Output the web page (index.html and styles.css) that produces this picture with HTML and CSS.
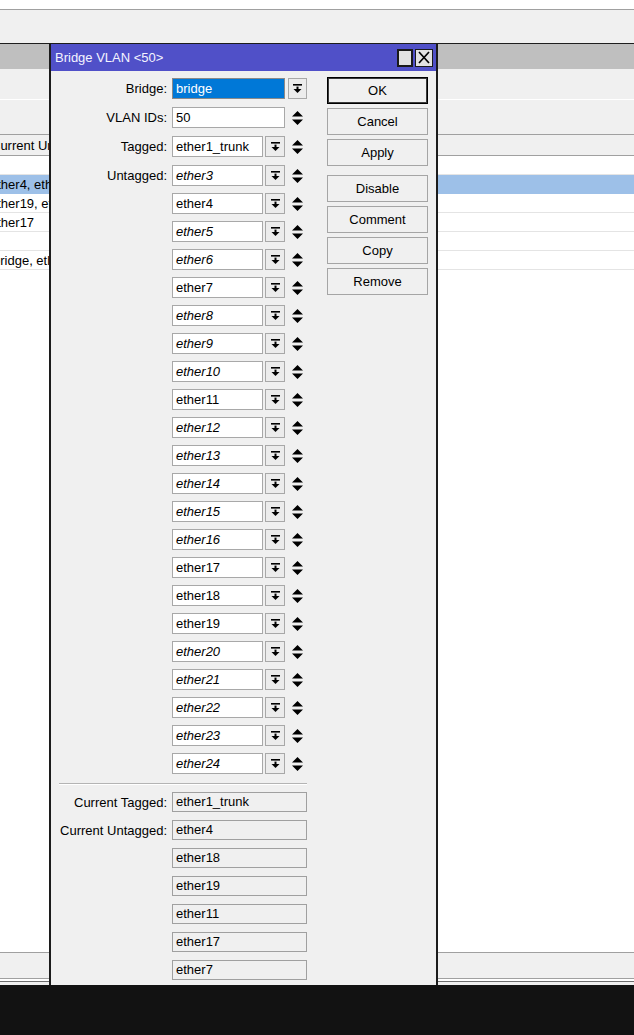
FILE: index.html
```html
<!DOCTYPE html>
<html>
<head>
<meta charset="utf-8">
<title>Bridge VLAN</title>
<link rel="stylesheet" href="styles.css">
</head>
<body>
<div class="screen">
  <div class="topstrip"></div>
  <div class="toolbar1"></div>
  <div class="parent-title"></div>
  <div class="toolbar2"></div>
  <div class="toolbar3"></div>
  <div class="thead"><span class="cell">Current Untagged</span></div>
  <div class="tbody">
    <div class="row"></div>
    <div class="row sel"><span class="cell">ether4, ether18</span></div>
    <div class="row"><span class="cell">ether19, ether11</span></div>
    <div class="row"><span class="cell">ether17</span></div>
    <div class="row"></div>
    <div class="row"><span class="cell cell-b">bridge, ether1_trunk</span></div>
  </div>
  <div class="statusbar"></div>
  <div class="bottomlines"></div>
  <div class="taskbar"></div>

  <div class="dialog">
    <div class="titlebar">
      <span class="title">Bridge VLAN &lt;50&gt;</span>
      <div class="tbtns">
        <span class="tb tb-max"></span>
        <span class="tb tb-close"><svg width="16" height="15" viewBox="0 0 16 15"><path d="M3 2 L13 13 M13 2 L3 13" stroke="#000" stroke-width="1.7" fill="none"/></svg></span>
      </div>
    </div>
    <div class="dbody">
      <div class="form">
        <div class="frow r-first">
          <span class="lbl">Bridge:</span>
          <span class="inp inp-wide inp-sel">bridge</span>
          <span class="dd dd-gap"><svg class="ddi" width="9" height="9" viewBox="0 0 9 9"><rect x="0" y="0" width="9" height="1.6" fill="#000"/><rect x="3.5" y="2.6" width="2" height="2.6" fill="#000"/><path d="M0.5 5 H8.5 L4.5 9 Z" fill="#000"/></svg></span>
        </div>
        <div class="frow r-8">
          <span class="lbl">VLAN IDs:</span>
          <span class="inp inp-wide">50</span>
          <span class="ud ud-gap"><svg width="11" height="14" viewBox="0 0 11 14"><path d="M0 5.5 L5.5 0 L11 5.5 Z M0 8.5 H11 L5.5 14 Z" fill="#000"/></svg></span>
        </div>
        <div class="frow r-8">
          <span class="lbl">Tagged:</span>
          <span class="inp">ether1_trunk</span>
          <span class="dd"><svg class="ddi" width="9" height="9" viewBox="0 0 9 9"><rect x="0" y="0" width="9" height="1.6" fill="#000"/><rect x="3.5" y="2.6" width="2" height="2.6" fill="#000"/><path d="M0.5 5 H8.5 L4.5 9 Z" fill="#000"/></svg></span>
          <span class="ud"><svg width="11" height="14" viewBox="0 0 11 14"><path d="M0 5.5 L5.5 0 L11 5.5 Z M0 8.5 H11 L5.5 14 Z" fill="#000"/></svg></span>
        </div>
        <div class="frow r-8">
          <span class="lbl">Untagged:</span>
          <span class="inp it">ether3</span>
          <span class="dd"><svg class="ddi" width="9" height="9" viewBox="0 0 9 9"><rect x="0" y="0" width="9" height="1.6" fill="#000"/><rect x="3.5" y="2.6" width="2" height="2.6" fill="#000"/><path d="M0.5 5 H8.5 L4.5 9 Z" fill="#000"/></svg></span>
          <span class="ud"><svg width="11" height="14" viewBox="0 0 11 14"><path d="M0 5.5 L5.5 0 L11 5.5 Z M0 8.5 H11 L5.5 14 Z" fill="#000"/></svg></span>
        </div>
        <div id="ports"></div>
        <div class="sep"></div>
        <div class="crow c-first">
          <span class="lbl">Current Tagged:</span>
          <span class="cur">ether1_trunk</span>
        </div>
        <div class="crow">
          <span class="lbl">Current Untagged:</span>
          <span class="cur">ether4</span>
        </div>
        <div class="crow"><span class="lbl"></span><span class="cur">ether18</span></div>
        <div class="crow"><span class="lbl"></span><span class="cur">ether19</span></div>
        <div class="crow"><span class="lbl"></span><span class="cur">ether11</span></div>
        <div class="crow"><span class="lbl"></span><span class="cur">ether17</span></div>
        <div class="crow"><span class="lbl"></span><span class="cur">ether7</span></div>
      </div>
      <div class="btns">
        <span class="btn btn-ok">OK</span>
        <span class="btn">Cancel</span>
        <span class="btn">Apply</span>
        <span class="btn btn-gap">Disable</span>
        <span class="btn">Comment</span>
        <span class="btn">Copy</span>
        <span class="btn">Remove</span>
      </div>
    </div>
  </div>
</div>
<script src="app.js"></script>
</body>
</html>
```

FILE: app.js
```js
(function () {
  var ports = [
    ["ether4", false], ["ether5", true], ["ether6", true], ["ether7", false],
    ["ether8", true], ["ether9", true], ["ether10", true], ["ether11", false],
    ["ether12", true], ["ether13", true], ["ether14", true], ["ether15", true],
    ["ether16", true], ["ether17", false], ["ether18", false], ["ether19", false],
    ["ether20", true], ["ether21", true], ["ether22", true], ["ether23", true],
    ["ether24", true]
  ];
  var dd = '<svg class="ddi" width="9" height="9" viewBox="0 0 9 9"><rect x="0" y="0" width="9" height="1.6" fill="#000"/><rect x="3.5" y="2.6" width="2" height="2.6" fill="#000"/><path d="M0.5 5 H8.5 L4.5 9 Z" fill="#000"/></svg>';
  var ud = '<svg width="11" height="14" viewBox="0 0 11 14"><path d="M0 5.5 L5.5 0 L11 5.5 Z M0 8.5 H11 L5.5 14 Z" fill="#000"/></svg>';
  var host = document.getElementById("ports");
  var html = "";
  ports.forEach(function (p) {
    html += '<div class="frow"><span class="lbl"></span><span class="inp' + (p[1] ? ' it' : '') + '">' + p[0] +
      '</span><span class="dd">' + dd + '</span><span class="ud">' + ud + '</span></div>';
  });
  host.innerHTML = html;
})();
```

FILE: styles.css
```css
* { box-sizing: border-box; }
html, body { margin: 0; padding: 0; }
body {
  width: 634px;
  height: 1035px;
  overflow: hidden;
  font-family: "Liberation Sans", Arial, sans-serif;
  font-size: 13px;
  color: #000;
  background: #fff;
}
.screen { position: relative; width: 634px; height: 1035px; overflow: hidden; }

.topstrip { height: 10px; background: #fff; border-bottom: 1px solid #a0a0a0; }
.toolbar1 { height: 34px; background: #f0f0f0; border-bottom: 1px solid #1e1e1e; }
.parent-title { height: 25px; background: #bfbfbf; }
.toolbar2 { height: 31px; background: #f0f0f0; border-bottom: 1px solid #fff; }
.toolbar3 { height: 35px; background: #f0f0f0; border-bottom: 1px solid #a0a0a0; }
.thead {
  height: 21px; background: #f0f0f0; border-bottom: 1px solid #a0a0a0;
  display: flex; align-items: center; white-space: nowrap; overflow: hidden;
}
.thead .cell { margin-left: -9px; }
.tbody { height: 796px; background: #fff; overflow: hidden; }
.row {
  height: 19px; border-bottom: 1px solid #e4e4e4;
  display: flex; align-items: center; white-space: nowrap; overflow: hidden;
}
.row.sel { background: #9dc0e8; border-bottom-color: #9dc0e8; }
.cell { margin-left: -10px; }
.cell-b { margin-left: -7px; }
.statusbar { height: 27px; background: #f0f0f0; border-top: 1px solid #a0a0a0; border-bottom: 1px solid #a0a0a0; }
.bottomlines { height: 6px; background: #f0f0f0; border-top: 2px solid #fff; border-bottom: 3px solid #f0f0f0; box-shadow: inset 0 1px 0 #6e6e6e; }
.taskbar { height: 50px; background: #121212; }

/* dialog window */
.dialog {
  position: absolute; left: 49px; top: 43px;
  width: 389px; height: 942px;
  background: #f0f0f0;
  border: 2px solid #1c1c1c; border-top: 1px solid #1c1c1c; border-bottom: 0;
  overflow: hidden;
}
.titlebar {
  height: 27px; background: #5050c8;
  display: flex; align-items: center; justify-content: space-between;
  padding-left: 4px; padding-right: 3px;
}
.title { color: #f4f4ff; font-size: 13px; }
.tbtns { display: flex; gap: 2px; align-items: center; }
.tb {
  display: block; height: 18px; background: #e2e2e2;
  border: 1px solid #1a1a1a;
}
.tb-max { width: 16px; box-shadow: inset 0 0 0 1px #1a1a1a; }
.tb-close { width: 18px; display: flex; align-items: center; justify-content: center; }

.dbody { display: flex; align-items: flex-start; }
.form { width: 256px; padding-top: 7px; }
.frow { display: flex; align-items: center; height: 21px; margin-top: 7px; }
.r-first { margin-top: 0; }
.r-8 { margin-top: 8px; }
.lbl { width: 116px; margin-right: 5px; text-align: right; white-space: nowrap; flex: none; }
.inp {
  width: 91px; height: 21px; flex: none;
  background: #fff; border: 1px solid #a8a8a8;
  padding-left: 3px; line-height: 19px; white-space: nowrap; overflow: hidden;
}
.inp-wide { width: 113px; }
.inp-sel { background: #0078d7; color: #fff; border-color: #8a8a8a; }
.it { font-style: italic; }
.dd {
  width: 20px; height: 21px; margin-left: 2px; flex: none;
  background: #ececec; border: 1px solid #a8a8a8;
  display: flex; align-items: center; justify-content: center;
}
.dd-gap { margin-left: 3px; width: 19px; }
.ddi { display: block; }
.ud { width: 19px; margin-left: 3px; flex: none; display: flex; justify-content: center; }
.ud svg { display: block; }
.ud-gap { margin-left: 3px; }

.sep { height: 2px; margin: 9px 0 0 8px; border-top: 1px solid #b4b4b4; border-bottom: 1px solid #fff; }
.crow { display: flex; align-items: center; height: 20px; margin-top: 8px; }
.c-first { margin-top: 7px; }
.cur {
  width: 135px; height: 20px; flex: none;
  background: #f0f0f0; border: 1px solid #a0a0a0;
  padding-left: 3px; line-height: 18px; white-space: nowrap;
}

.btns { width: 101px; margin-left: 20px; padding-top: 6px; display: flex; flex-direction: column; gap: 4px; }
.btn {
  display: flex; align-items: center; justify-content: center;
  height: 27px; background: #f0f0f0; border: 1px solid #a5a5a5;
}
.btn-ok { border-color: #000; box-shadow: inset 0 0 0 1px #3a3a3a; }
.btn-gap { margin-top: 5px; }
```
